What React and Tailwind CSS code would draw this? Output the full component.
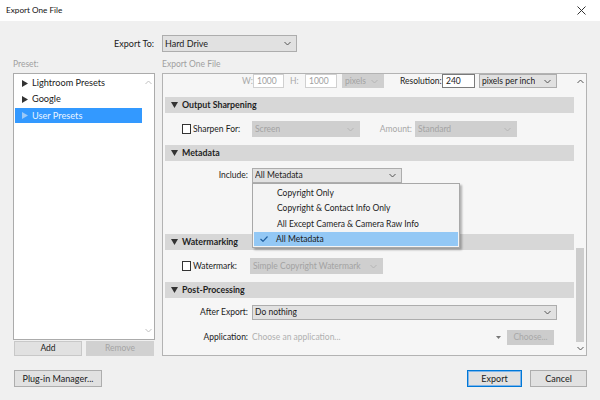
import React from "react";

function Chev({ className = "" }) {
  return (
    <svg width="7" height="5" viewBox="0 0 7 5" className={className}>
      <path d="M0.5 1 L3.5 4 L6.5 1" fill="none" stroke="currentColor" strokeWidth="1" />
    </svg>
  );
}

function ChevUp({ className = "" }) {
  return (
    <svg width="7" height="5" viewBox="0 0 7 5" className={className}>
      <path d="M0.5 4 L3.5 1 L6.5 4" fill="none" stroke="currentColor" strokeWidth="1" />
    </svg>
  );
}

function Drop({ w, text, disabled, h = "h-[15px]" }) {
  return (
    <div
      className={`${w} ${h} flex items-center justify-between pl-[2px] pr-[5px] border ${
        disabled
          ? "bg-[#cfcfcf] border-[#cfcfcf] text-[#a3a3a3]"
          : "bg-[#e1e1e1] border-[#adadad] text-[#1b1b1b]"
      }`}
    >
      <span className="truncate">{text}</span>
      <Chev className={disabled ? "text-[#b5b5b5]" : "text-[#555]"} />
    </div>
  );
}

function Header({ title }) {
  return (
    <div className="h-[16px] bg-[#d7d7d7] flex items-center">
      <svg width="7" height="6" viewBox="0 0 7 6" className="ml-[6px] text-[#333]">
        <path d="M0 0 L7 0 L3.5 6 Z" fill="currentColor" />
      </svg>
      <span className="ml-[4px] font-bold text-[#1f1f1f] text-[8.8px]">{title}</span>
    </div>
  );
}

function Check() {
  return <div className="w-[9px] h-[10px] bg-white border border-[#333]" />;
}

function Tri({ className = "" }) {
  return (
    <svg width="6" height="7" viewBox="0 0 6 7" className={className}>
      <path d="M0 0 L6 3.5 L0 7 Z" fill="currentColor" />
    </svg>
  );
}

export default function App() {
  return (
    <div className="w-[600px] h-[400px] bg-[#f0f0f0] flex flex-col overflow-hidden text-[8.5px] text-[#1b1b1b] font-['Lato',sans-serif]">
      {/* title bar */}
      <div className="h-[21px] bg-white flex items-center justify-between pl-[6px] pr-[14px] shrink-0">
        <span className="text-[8.2px] text-[#111]">Export One File</span>
        <svg width="9" height="9" viewBox="0 0 9 9" className="text-[#333]">
          <path d="M0.5 0.5 L8.5 8.5 M8.5 0.5 L0.5 8.5" stroke="currentColor" strokeWidth="1" />
        </svg>
      </div>

      {/* export to */}
      <div className="mt-[14px] h-[17px] flex items-center shrink-0">
        <span className="w-[154px] text-right text-[9px]">Export To:</span>
        <div className="ml-[8px]">
          <Drop w="w-[135px]" h="h-[17px]" text={<span className="text-[9px]">Hard Drive</span>} />
        </div>
      </div>

      {/* labels */}
      <div className="mt-[6px] h-[12px] flex items-center pl-[13px] text-[#a0a0a0] shrink-0">
        <span className="w-[149px]">Preset:</span>
        <span>Export One File</span>
      </div>

      {/* main */}
      <div className="mt-[3px] flex pl-[13px] shrink-0">
        {/* left column */}
        <div className="w-[142px] flex flex-col">
          <div className="h-[267px] bg-white border border-[#ababab] flex">
            <div className="flex-1 flex flex-col pt-[1px] text-[9.2px]">
              <div className="h-[16px] flex items-center pl-[8px]">
                <Tri className="text-[#333]" />
                <span className="ml-[4px]">Lightroom Presets</span>
              </div>
              <div className="h-[16px] flex items-center pl-[8px]">
                <Tri className="text-[#333]" />
                <span className="ml-[4px]">Google</span>
              </div>
              <div className="h-[15px] mt-[1px] flex items-center pl-[7px] ml-[1px] bg-[#3399ff] text-[#eaf4ff]">
                <Tri className="text-[#9cc9f7]" />
                <span className="ml-[4px]">User Presets</span>
              </div>
            </div>
            <div className="w-[12px] flex flex-col items-center justify-between py-[6px] text-[#c0c0c0]">
              <ChevUp />
              <Chev />
            </div>
          </div>
          <div className="mt-[1px] flex pl-[1px] gap-[4px]">
            <div className="w-[68px] h-[15px] bg-[#e1e1e1] border border-[#c8c8c8] flex items-center justify-center">Add</div>
            <div className="w-[68px] h-[15px] bg-[#d1d1d1] border border-[#d1d1d1] flex items-center justify-center text-[#a5a5a5]">Remove</div>
          </div>
        </div>

        {/* right panel */}
        <div className="ml-[7px] w-[425px] h-[283px] border border-[#b3b3b3] bg-[#f6f6f6] flex">
          <div className="flex-1 flex flex-col pl-[2px] relative">
            {/* W/H row */}
            <div className="h-[23px] flex items-start">
              <span className="ml-[77px] w-[11px] text-[#a8a8a8] leading-[14px]">W:</span>
              <div className="w-[31px] h-[14px] bg-white border border-[#d0d0d0] text-[#a0a0a0] pl-[3px] leading-[12px]">1000</div>
              <span className="ml-[6px] w-[15px] text-[#a8a8a8] leading-[14px]">H:</span>
              <div className="w-[32px] h-[14px] bg-white border border-[#d0d0d0] text-[#a0a0a0] pl-[3px] leading-[12px]">1000</div>
              <div className="ml-[5px]">
                <Drop w="w-[42px]" h="h-[14px]" text="pixels" disabled />
              </div>
              <span className="ml-[16px] w-[42px] leading-[14px] whitespace-nowrap">Resolution:</span>
              <div className="w-[33px] h-[14px] bg-white border border-[#7a7a7a] pl-[3px] leading-[12px]">240</div>
              <div className="ml-[4px]">
                <Drop w="w-[78px]" h="h-[14px]" text="pixels per inch" />
              </div>
            </div>

            <Header title="Output Sharpening" />
            <div className="h-[32px] flex items-center">
              <div className="w-[87px] flex items-center pl-[17px]">
                <Check />
                <span className="ml-[2px]">Sharpen For:</span>
              </div>
              <Drop w="w-[108px]" h="h-[16px]" text="Screen" disabled />
              <span className="w-[55px] text-right pr-[3px] text-[#a8a8a8]">Amount:</span>
              <Drop w="w-[102px]" h="h-[16px]" text="Standard" disabled />
            </div>

            <Header title="Metadata" />
            <div className="h-[73px] flex flex-col">
              <div className="mt-[7px] h-[15px] flex items-center">
                <span className="w-[83px] text-right">Include:</span>
                <div className="ml-[4px] relative">
                  <Drop w="w-[150px]" text="All Metadata" />
                  <div className="absolute left-0 top-[15px] w-[208px] h-[65px] bg-[#f4f4f4] border border-[#a8a8a8] shadow-[2px_2px_2px_rgba(0,0,0,0.28)] z-10 flex flex-col pt-[2px]">
                    <div className="h-[15px] flex items-center pl-[24px]">Copyright Only</div>
                    <div className="h-[15px] flex items-center pl-[24px]">Copyright &amp; Contact Info Only</div>
                    <div className="h-[16px] flex items-center pl-[24px]">All Except Camera &amp; Camera Raw Info</div>
                    <div className="h-[14px] mx-[1px] flex items-center bg-[#93c8f5] relative">
                      <svg width="8" height="6" viewBox="0 0 8 6" className="absolute left-[6px] top-[4px] text-[#1f5e9e]">
                        <path d="M0.5 3 L3 5.3 L7.5 0.5" fill="none" stroke="currentColor" strokeWidth="1.2" />
                      </svg>
                      <span className="pl-[22px]">All Metadata</span>
                    </div>
                  </div>
                </div>
              </div>
            </div>

            <Header title="Watermarking" />
            <div className="h-[32px] flex items-center">
              <div className="w-[85px] flex items-center pl-[17px]">
                <Check />
                <span className="ml-[2px]">Watermark:</span>
              </div>
              <Drop w="w-[133px]" h="h-[16px]" text="Simple Copyright Watermark" disabled />
            </div>

            <Header title="Post-Processing" />
            <div className="mt-[7px] h-[15px] flex items-center">
              <span className="w-[83px] text-right">After Export:</span>
              <div className="ml-[4px]">
                <Drop w="w-[305px]" text="Do nothing" />
              </div>
            </div>
            <div className="mt-[10px] h-[15px] flex items-center">
              <span className="w-[83px] text-right">Application:</span>
              <span className="ml-[4px] w-[244px] text-[#b0b0b0]">Choose an application...</span>
              <svg width="5" height="3" viewBox="0 0 5 3" className="text-[#777]">
                <path d="M0 0 L5 0 L2.5 3 Z" fill="currentColor" />
              </svg>
              <div className="ml-[6px] w-[47px] h-[15px] bg-[#cccccc] text-[#a8a8a8] flex items-center justify-center">Choose...</div>
            </div>
          </div>

          {/* scrollbar */}
          <div className="w-[12px] flex flex-col items-center">
            <div className="h-[14px] flex items-center justify-center text-[#555]">
              <ChevUp />
            </div>
            <div className="flex-1 flex flex-col items-center">
              <div className="mt-[160px] w-[8px] h-[94px] bg-[#cdcdcd]" />
            </div>
            <div className="h-[13px] flex items-center justify-center text-[#555]">
              <Chev />
            </div>
          </div>
        </div>
      </div>

      {/* bottom */}
      <div className="mt-[14px] flex items-center pl-[14px] pr-[13px] shrink-0">
        <div className="w-[88px] h-[17px] bg-[#e1e1e1] border border-[#adadad] flex items-center justify-center text-[9px]">Plug-in Manager...</div>
        <div className="flex-1" />
        <div className="w-[55px] h-[17px] bg-[#e1e1e1] border border-[#0078d7] shadow-[inset_0_0_0_1px_#7fb5ea] flex items-center justify-center text-[9px]">Export</div>
        <div className="ml-[8px] w-[57px] h-[17px] bg-[#e1e1e1] border border-[#adadad] flex items-center justify-center text-[9px]">Cancel</div>
      </div>
    </div>
  );
}
